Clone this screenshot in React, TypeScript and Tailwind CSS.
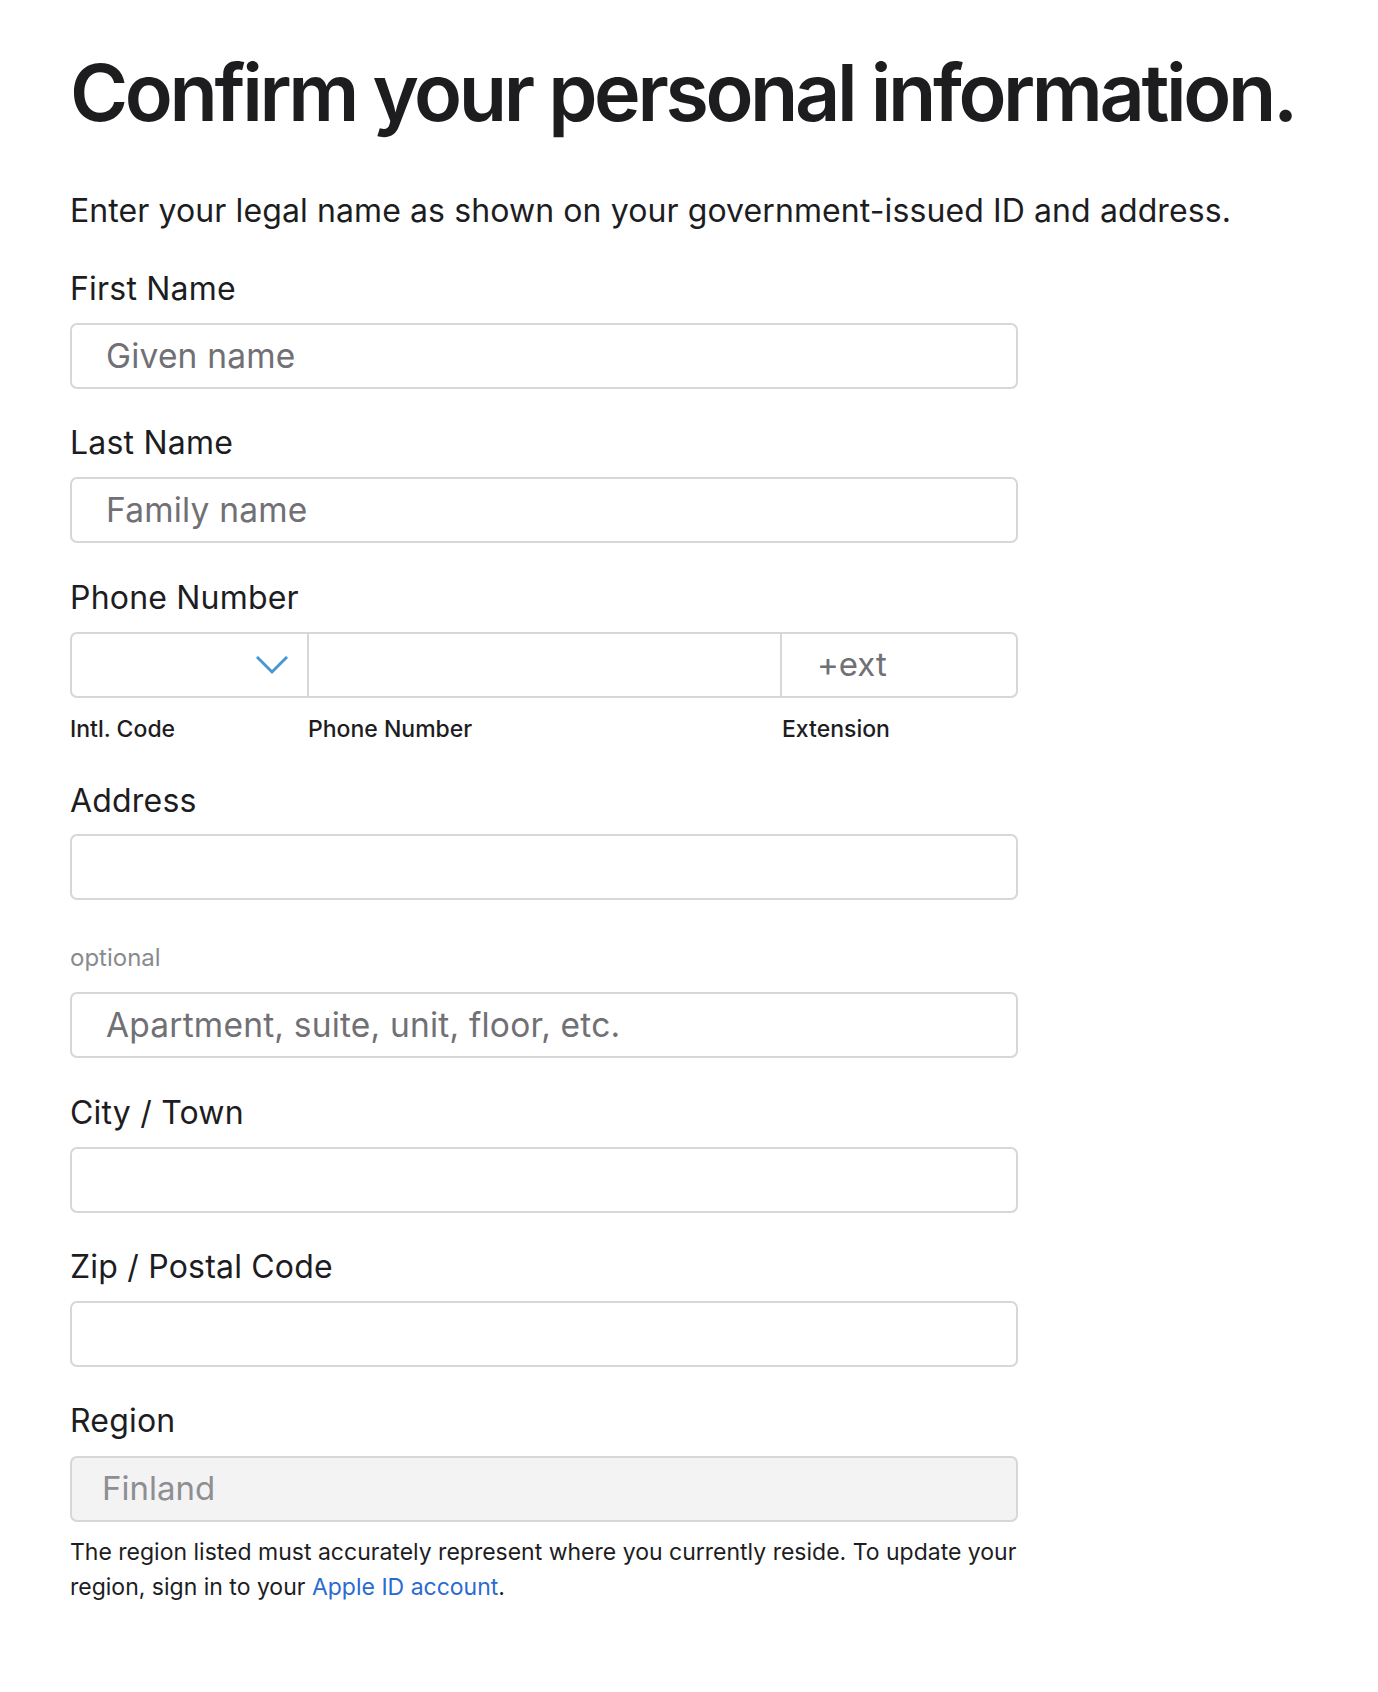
import React from "react";

const font = { fontFamily: "Inter, 'Noto Sans', sans-serif" };

function Label({ children }: { children: React.ReactNode }) {
  return <label className="block text-[32px] leading-[40px] tracking-[0.2px] text-[#1d1d1f]">{children}</label>;
}

function TextInput({ placeholder }: { placeholder?: string }) {
  return (
    <input
      type="text"
      placeholder={placeholder}
      className="block h-[66px] w-[948px] rounded-[7px] border-2 border-[#d6d6db] bg-white pl-[34px] pr-4 text-[33.5px] tracking-[0.2px] text-[#1d1d1f] outline-none placeholder:text-[#707075]"
    />
  );
}

function Chevron() {
  return (
    <svg width="32" height="19" viewBox="0 0 32 19" fill="none">
      <path d="M2 2 L16 16 L30 2" stroke="#4a98d3" strokeWidth="3" strokeLinecap="square" />
    </svg>
  );
}

export default function App() {
  return (
    <div className="min-h-screen bg-white pl-[70px] pt-[52px] pb-20 text-[#1d1d1f]" style={font}>
      <h1 className="whitespace-nowrap text-[79px] font-semibold leading-[80px] tracking-[-3.4px]">
        Confirm your personal information.
      </h1>

      <p className="mt-[59px] text-[32px] leading-[40px] tracking-[0.1px]">
        Enter your legal name as shown on your government-issued ID and address.
      </p>

      <div className="mt-[38px]">
        <Label>First Name</Label>
        <div className="mt-[14px]">
          <TextInput placeholder="Given name" />
        </div>
      </div>

      <div className="mt-[34px]">
        <Label>Last Name</Label>
        <div className="mt-[14px]">
          <TextInput placeholder="Family name" />
        </div>
      </div>

      <div className="mt-[35px]">
        <Label>Phone Number</Label>
        <div className="mt-[14px] flex h-[66px] w-[948px] rounded-[7px] border-2 border-[#d6d6db] bg-white">
          <div className="flex w-[237px] items-center justify-end border-r-2 border-[#d6d6db] pr-[19px]">
            <Chevron />
          </div>
          <input type="text" className="w-[473px] border-r-2 border-[#d6d6db] bg-transparent px-4 text-[33px] outline-none" />
          <input
            type="text"
            placeholder="+ext"
            className="min-w-0 flex-1 bg-transparent pl-[35px] text-[33px] outline-none placeholder:text-[#707075]"
          />
        </div>
        <div className="mt-[16px] flex text-[23px] font-medium leading-[30px] text-[#1d1d1f]">
          <span className="w-[238px]">Intl. Code</span>
          <span className="w-[474px]">Phone Number</span>
          <span>Extension</span>
        </div>
      </div>

      <div className="mt-[37px]">
        <Label>Address</Label>
        <div className="mt-[13px]">
          <TextInput />
        </div>
        <div className="mt-[43px] text-[24px] leading-[30px] text-[#8a8a8e]">optional</div>
        <div className="mt-[19px]">
          <TextInput placeholder="Apartment, suite, unit, floor, etc." />
        </div>
      </div>

      <div className="mt-[35px]">
        <Label>City / Town</Label>
        <div className="mt-[14px]">
          <TextInput />
        </div>
      </div>

      <div className="mt-[34px]">
        <Label>Zip / Postal Code</Label>
        <div className="mt-[14px]">
          <TextInput />
        </div>
      </div>

      <div className="mt-[34px]">
        <Label>Region</Label>
        <div className="mt-[15px] flex h-[66px] w-[948px] items-center rounded-[7px] border-2 border-[#d6d6db] bg-[#f3f3f3] pl-[30px] text-[33px] text-[#8e8e93]">
          Finland
        </div>
        <p className="mt-[13px] w-[960px] text-[23px] leading-[35px] text-[#1d1d1f]">
          The region listed must accurately represent where you currently reside. To update your region, sign in to your{" "}
          <a href="#" className="text-[#2a6bd1]">Apple ID account</a>.
        </p>
      </div>
    </div>
  );
}
